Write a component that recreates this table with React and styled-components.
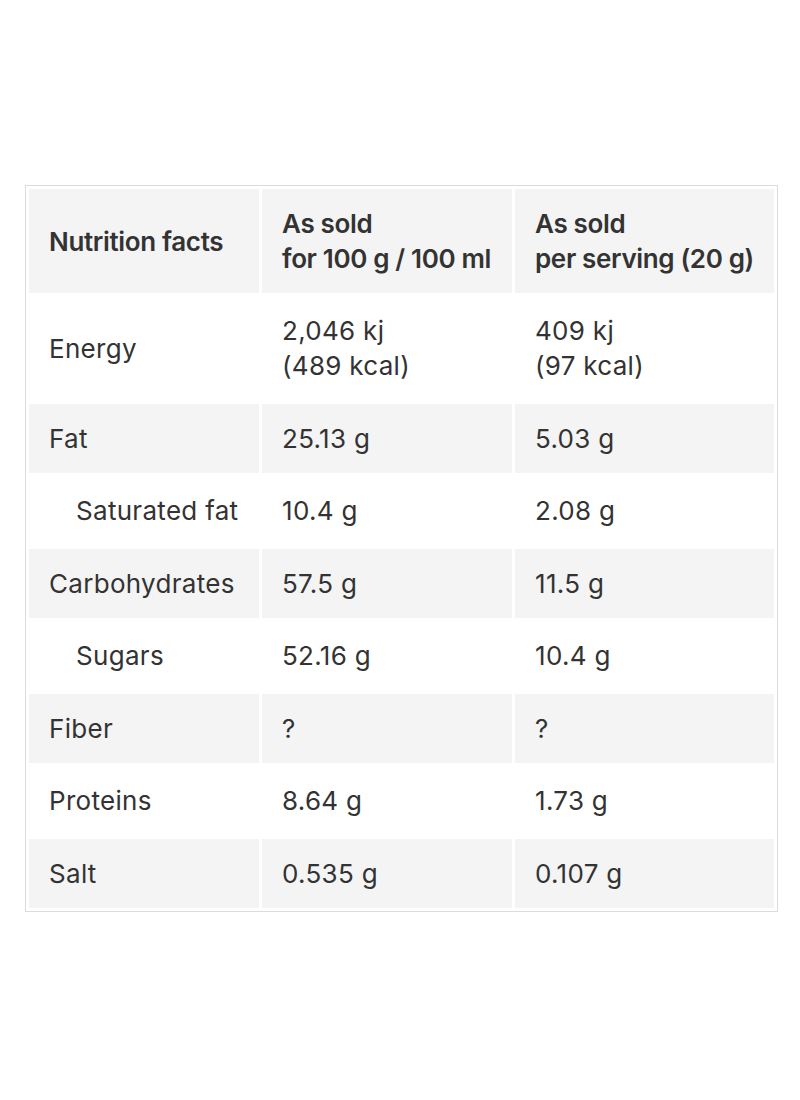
import React from 'react';
import styled, { createGlobalStyle } from 'styled-components';

const GlobalStyle = createGlobalStyle`
  body {
    margin: 0;
    background: #ffffff;
    font-family: Inter, "Noto Sans", sans-serif;
  }
`;

const Page = styled.div`
  padding: 185px 0 0 25px;
`;

const Table = styled.table`
  border: 1px solid #dcdcdc;
  border-spacing: 3px;
  border-collapse: separate;
  width: 753px;
  table-layout: fixed;
  color: #333333;
  font-size: 26px;
  line-height: 35px;
`;

const HeadCell = styled.th`
  background: #f4f4f4;
  text-align: left;
  font-weight: 600;
  padding: 17px 4px 17px 20px;
  vertical-align: middle;
  white-space: nowrap;
  letter-spacing: -0.35px;
`;

const Row = styled.tr`
  background: ${(p) => (p.$shaded ? '#f4f4f4' : '#ffffff')};
`;

const Cell = styled.td`
  padding: 17px 4px 17.5px ${(p) => (p.$indent ? '47px' : '20px')};
  vertical-align: middle;
  font-weight: 400;
  white-space: nowrap;
  letter-spacing: 0.3px;
`;

const rows = [
  { name: 'Energy', per100: ['2,046 kj', '(489 kcal)'], serving: ['409 kj', '(97 kcal)'] },
  { name: 'Fat', per100: ['25.13 g'], serving: ['5.03 g'] },
  { name: 'Saturated fat', per100: ['10.4 g'], serving: ['2.08 g'], indent: true },
  { name: 'Carbohydrates', per100: ['57.5 g'], serving: ['11.5 g'] },
  { name: 'Sugars', per100: ['52.16 g'], serving: ['10.4 g'], indent: true },
  { name: 'Fiber', per100: ['?'], serving: ['?'] },
  { name: 'Proteins', per100: ['8.64 g'], serving: ['1.73 g'] },
  { name: 'Salt', per100: ['0.535 g'], serving: ['0.107 g'] },
];

function Lines({ items }) {
  return items.map((t, i) => (
    <React.Fragment key={i}>
      {i > 0 && <br />}
      {t}
    </React.Fragment>
  ));
}

export default function App() {
  return (
    <Page>
      <GlobalStyle />
      <Table>
        <colgroup>
          <col style={{ width: 230 }} />
          <col style={{ width: 250 }} />
          <col style={{ width: 259 }} />
        </colgroup>
        <thead>
          <tr>
            <HeadCell>Nutrition facts</HeadCell>
            <HeadCell>As sold<br />for 100 g / 100 ml</HeadCell>
            <HeadCell>As sold<br />per serving (20 g)</HeadCell>
          </tr>
        </thead>
        <tbody>
          {rows.map((r, i) => (
            <Row key={r.name} $shaded={i % 2 === 1}>
              <Cell $indent={r.indent}>{r.name}</Cell>
              <Cell><Lines items={r.per100} /></Cell>
              <Cell><Lines items={r.serving} /></Cell>
            </Row>
          ))}
        </tbody>
      </Table>
    </Page>
  );
}
